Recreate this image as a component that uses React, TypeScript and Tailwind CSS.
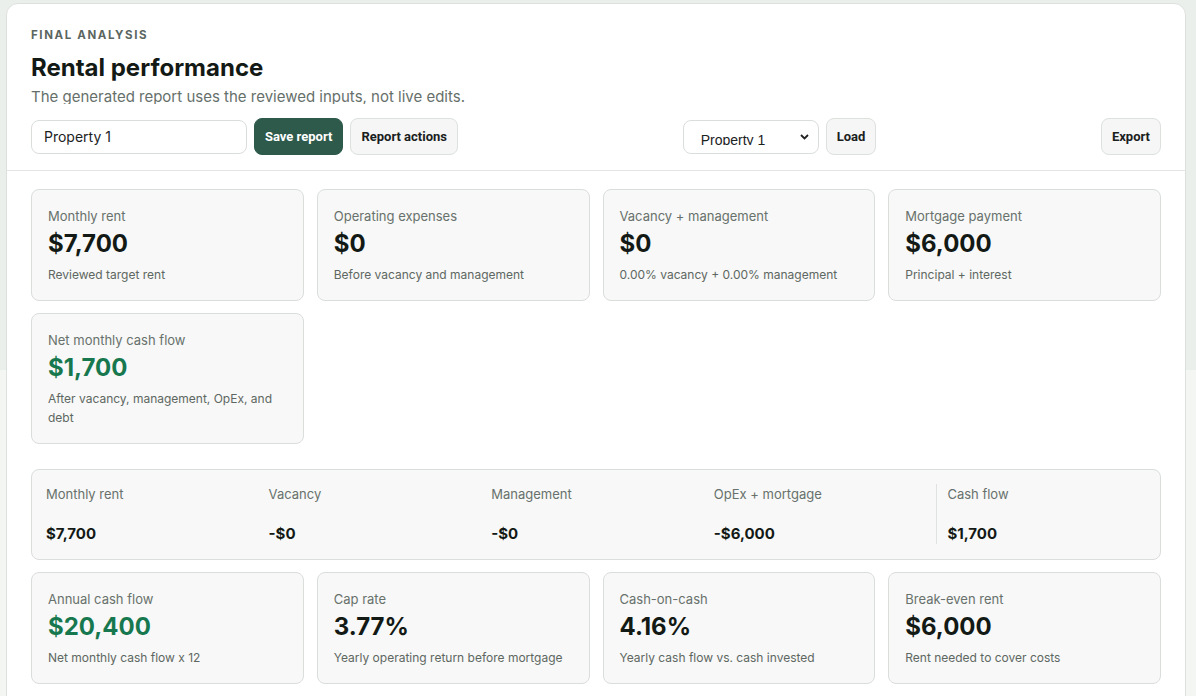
import React from 'react';

const topMetrics = [
  { label: 'Monthly rent', value: '$7,700', note: 'Reviewed target rent' },
  { label: 'Operating expenses', value: '$0', note: 'Before vacancy and management' },
  { label: 'Vacancy + management', value: '$0', note: '0.00% vacancy + 0.00% management' },
  { label: 'Mortgage payment', value: '$6,000', note: 'Principal + interest' },
  { label: 'Net monthly cash flow', value: '$1,700', note: 'After vacancy, management, OpEx, and debt', good: true },
];

const breakdown = [
  { label: 'Monthly rent', value: '$7,700' },
  { label: 'Vacancy', value: '-$0' },
  { label: 'Management', value: '-$0' },
  { label: 'OpEx + mortgage', value: '-$6,000' },
  { label: 'Cash flow', value: '$1,700', total: true },
];

const returnMetrics = [
  { label: 'Annual cash flow', value: '$20,400', note: 'Net monthly cash flow x 12', good: true },
  { label: 'Cap rate', value: '3.77%', note: 'Yearly operating return before mortgage' },
  { label: 'Cash-on-cash', value: '4.16%', note: 'Yearly cash flow vs. cash invested' },
  { label: 'Break-even rent', value: '$6,000', note: 'Rent needed to cover costs' },
];

const btn =
  "h-[37px] rounded-lg border px-[10px] font-['Roboto',sans-serif] text-[13px] font-bold";
const btnLight = `${btn} border-[#dde1de] bg-[#f5f6f5] text-[#1a201d]`;

function MetricCard({ label, value, note, good }: { label: string; value: string; note: string; good?: boolean }) {
  return (
    <div className="rounded-lg border border-[#dadedb] bg-[#f7f8f7] px-4 py-4">
      <div className="text-[13px] leading-5 text-[#68716c]">{label}</div>
      <div className={`mt-0.5 text-[24px] font-bold leading-8 ${good ? 'text-[#17784f]' : 'text-[#131915]'}`}>{value}</div>
      <div className="mt-[5px] text-[12px] leading-[19px] text-[#5e6762]">{note}</div>
    </div>
  );
}

export default function App() {
  return (
    <div className="min-h-screen bg-[linear-gradient(to_bottom,#ebefec_0px,#ebefec_370px,#f4f6f4_370px)] pb-6 pl-[6px] pt-[3px] font-['Inter',sans-serif]">
      <div className="w-[1180px] rounded-xl border border-[#dde1de] bg-white">
        <div className="border-b border-[#e2e5e3] px-6 pb-[15px] pt-[23px]">
          <div className="text-[11.5px] font-bold uppercase leading-4 tracking-[0.14em] text-[#5b6661]">Final analysis</div>
          <h1 className="mt-[9px] text-[24px] font-bold leading-8 text-[#131915]">Rental performance</h1>
          <p className="mt-[3px] h-[17px] overflow-hidden text-[15px] leading-5 text-[#66706b]">
            The generated report uses the reviewed inputs, not live edits.
          </p>
          <div className="mt-[14px] flex items-center justify-between">
            <div className="flex items-center gap-[7px]">
              <input
                defaultValue="Property 1"
                className="h-[34px] w-[216px] rounded-lg border border-[#dadedb] bg-white px-3 text-[14px] text-[#1b221e] outline-none"
              />
              <button className={`${btn} border-[#2e5a4c] bg-[#2e5a4c] text-white`}>Save report</button>
              <button className={btnLight}>Report actions</button>
            </div>
            <div className="flex items-center gap-[7px]">
              <div className="flex h-[34px] w-[136px] items-start rounded-lg border border-[#dadedb] bg-white pl-[17px] pr-[9px]">
                <div className="mt-[9px] h-[15px] flex-1 overflow-hidden font-['Liberation_Sans',sans-serif] text-[14px] leading-5 text-[#1b221e]">
                  Property 1
                </div>
                <svg className="mt-[13px]" width="9" height="6" viewBox="0 0 9 6">
                  <path d="M1 1l3.5 3.5L8 1" fill="none" stroke="#222" strokeWidth="1.8" />
                </svg>
              </div>
              <button className={btnLight}>Load</button>
            </div>
            <button className={btnLight}>Export</button>
          </div>
        </div>

        <div className="px-6 pb-6 pt-[18px]">
          <div className="grid grid-cols-4 gap-x-[13px] gap-y-3">
            {topMetrics.map(m => (
              <MetricCard key={m.label} {...m} />
            ))}
          </div>

          <div className="mt-[25px] grid grid-cols-5 gap-[13px] rounded-lg border border-[#dadedb] bg-[#f7f8f7] px-3.5 pb-[15px] pt-3.5">
            {breakdown.map(b => (
              <div
                key={b.label}
                className={`flex flex-col gap-5 ${b.total ? 'border-l border-[#dfe2e0] pl-2.5' : ''}`}
              >
                <div className="text-[13px] leading-5 text-[#68716c]">{b.label}</div>
                <div className="text-[15px] font-bold leading-5 text-[#131915]">{b.value}</div>
              </div>
            ))}
          </div>

          <div className="mt-3 grid grid-cols-4 gap-[13px]">
            {returnMetrics.map(m => (
              <MetricCard key={m.label} {...m} />
            ))}
          </div>
        </div>
      </div>
    </div>
  );
}
